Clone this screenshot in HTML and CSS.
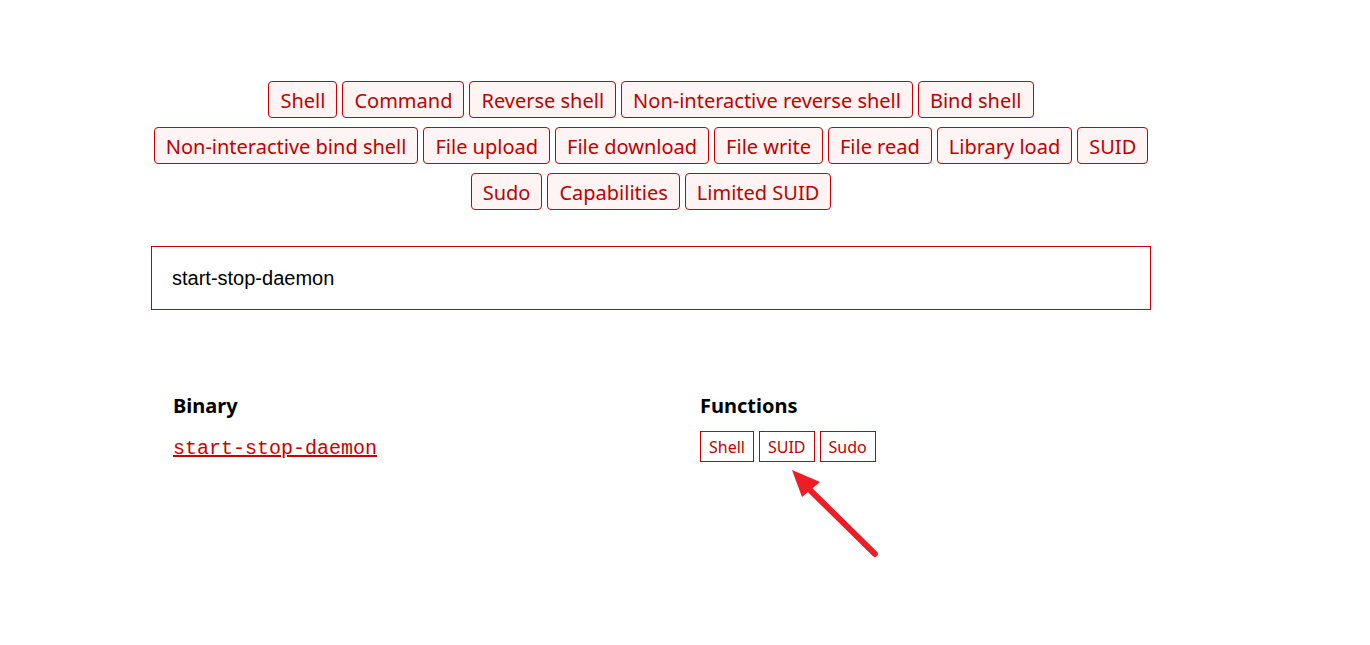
FILE: index.html
```html
<!DOCTYPE html>
<html>
<head>
<meta charset="utf-8">
<link rel="stylesheet" href="styles.css">
</head>
<body>
<div class="page">
  <div class="filters">
    <span class="filter">Shell</span>
    <span class="filter">Command</span>
    <span class="filter">Reverse shell</span>
    <span class="filter">Non-interactive reverse shell</span>
    <span class="filter">Bind shell</span>
    <span class="filter">Non-interactive bind shell</span>
    <span class="filter">File upload</span>
    <span class="filter">File download</span>
    <span class="filter">File write</span>
    <span class="filter">File read</span>
    <span class="filter">Library load</span>
    <span class="filter">SUID</span>
    <span class="filter">Sudo</span>
    <span class="filter">Capabilities</span>
    <span class="filter">Limited SUID</span>
  </div>
  <div class="search">start-stop-daemon</div>
  <div class="results">
    <div class="col-bin">
      <div class="th">Binary</div>
      <a class="bin-link" href="#">start-stop-daemon</a>
    </div>
    <div class="col-fn">
      <div class="th">Functions</div>
      <div class="tags">
        <span class="tag">Shell</span>
        <span class="tag">SUID</span>
        <span class="tag">Sudo</span>
      </div>
    </div>
  </div>
</div>
<div class="callout-shaft"></div>
<div class="callout-head"></div>
</body>
</html>
```
FILE: styles.css
```css
html, body {
  margin: 0;
  padding: 0;
  background: #fff;
}
body {
  position: relative;
  min-height: 645px;
}
.page {
  width: 1000px;
  margin-left: 151px;
  padding-top: 81px;
  font-family: "Noto Sans", "Open Sans", sans-serif;
}
.filters {
  display: flex;
  flex-wrap: wrap;
  justify-content: center;
  gap: 9px 5px;
}
.filter {
  display: inline-block;
  box-sizing: border-box;
  height: 37px;
  padding: 0 11px;
  font-size: 20px;
  line-height: 37px;
  color: #c00000;
  background: #fff4f4;
  border: 1px solid #cc0000;
  border-radius: 4px;
}
.search {
  box-sizing: border-box;
  margin-top: 36px;
  height: 64px;
  border: 1px solid #cc0000;
  padding: 0 20px;
  font-family: "Liberation Sans", Arial, sans-serif;
  font-size: 20px;
  line-height: 62px;
  color: #000;
}
.results {
  display: flex;
  margin-top: 82px;
  padding-left: 22px;
}
.col-bin {
  width: 527px;
}
.th {
  font-weight: 700;
  font-size: 20px;
  line-height: 27px;
  color: #000;
}
.bin-link {
  display: inline-block;
  margin-top: 18px;
  font-family: "Liberation Mono", "Courier New", monospace;
  font-size: 20px;
  line-height: 24px;
  color: #cc0000;
  text-decoration: underline;
}
.tags {
  display: flex;
  gap: 5px;
  margin-top: 12px;
}
.tag {
  box-sizing: border-box;
  height: 31px;
  padding: 0 8px;
  border: 1px solid #cc0000;
  font-size: 16px;
  line-height: 30px;
  color: #c00000;
  background: #fff;
}
.callout-shaft {
  position: absolute;
  left: 794px;
  top: 519px;
  width: 97px;
  height: 6px;
  border-radius: 3px;
  background: #ee1c25;
  transform: rotate(44.6deg);
}
.callout-head {
  position: absolute;
  left: 790px;
  top: 468px;
  width: 32px;
  height: 32px;
  background: #ee1c25;
  clip-path: polygon(2px 2px, 12px 29px, 30px 14px);
}
```
